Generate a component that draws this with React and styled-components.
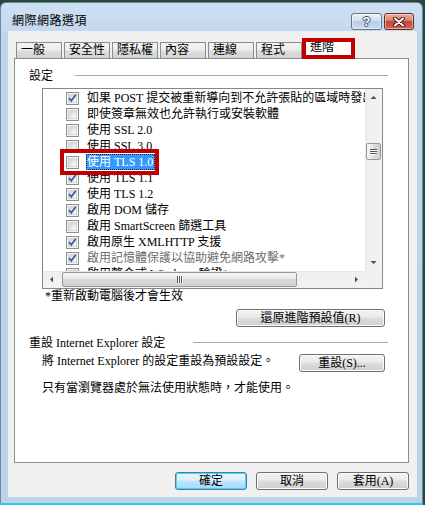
import React from "react";
import styled, { createGlobalStyle } from "styled-components";

const GlobalStyle = createGlobalStyle`
  html, body { margin: 0; padding: 0; }
  body {
    background: #27483b;
    font-family: "Liberation Serif", "Noto Sans CJK TC", serif;
    font-size: 12px;
    color: #000;
  }
`;

const Screen = styled.div`
  width: 425px;
  height: 505px;
  box-sizing: border-box;
  padding-top: 2px;
  background: #27483b;
  overflow: hidden;
`;

const Window = styled.div`
  width: 423px;
  height: 501px;
  box-sizing: border-box;
  display: flex;
  flex-direction: column;
  background: linear-gradient(#cfe0f3, #bed4ec 40px, #bcd3eb);
  border: 1px solid #6b88a8;
  border-bottom: none;
  border-radius: 6px 6px 0 0;
  padding: 0 5px 6px 7px;
`;

const TitleBar = styled.div`
  height: 28px;
  display: flex;
  align-items: flex-start;
`;

const Title = styled.div`
  flex: 1;
  margin: 11px 0 0 4px;
  line-height: 14px;
  letter-spacing: 0.5px;
`;

const CaptionButton = styled.div`
  width: ${p => (p.$close ? 30 : 31)}px;
  height: 17px;
  margin-top: 10px;
  margin-left: ${p => (p.$close ? 2 : 0)}px;
  margin-right: ${p => (p.$close ? 3 : 0)}px;
  box-sizing: border-box;
  border: 1px solid ${p => (p.$close ? "#6a2a24" : "#5f7591")};
  border-radius: 3px;
  display: flex;
  align-items: center;
  justify-content: center;
  box-shadow: inset 0 0 0 1px rgba(255, 255, 255, 0.45);
  background: ${p =>
    p.$close
      ? "linear-gradient(#e9ae9f, #d9806f 45%, #c4463a 50%, #cf6450)"
      : "linear-gradient(#e8eff8, #d3e1f1 45%, #b9cee8 50%, #c8dbef)"};
`;

const HelpGlyph = styled.span`
  font-family: "Liberation Sans", sans-serif;
  font-weight: bold;
  font-size: 13px;
  line-height: 13px;
  color: #fff;
  text-shadow: 1px 0 #3e4f66, -1px 0 #3e4f66, 0 1px #3e4f66, 0 -1px #3e4f66;
`;

const Content = styled.div`
  flex: 1;
  display: flex;
  flex-direction: column;
  background: #f0f0f0;
  padding: 8px 8px 7px 6px;
`;

const TabStrip = styled.div`
  height: 19px;
  display: flex;
  align-items: flex-end;
  padding-left: 2px;
  position: relative;
  z-index: 2;
`;

const Tab = styled.div`
  width: 46px;
  height: 16px;
  margin-right: 2px;
  box-sizing: border-box;
  border: 1px solid #898c95;
  border-bottom: none;
  padding-left: 4px;
  line-height: 15px;
  background: linear-gradient(#f4f4f4, #ececec 45%, #dedede 55%, #d2d2d2);
`;

const ActiveTab = styled.div`
  width: 50px;
  height: 20px;
  margin-left: -2px;
  margin-bottom: -1px;
  box-sizing: border-box;
  border: 1px solid #898c95;
  border-bottom: none;
  padding-left: 7px;
  line-height: 15px;
  background: #fff;
  position: relative;
`;

const Mark = styled.div`
  position: absolute;
  left: ${p => p.$left}px;
  top: ${p => p.$top}px;
  width: ${p => p.$w}px;
  height: ${p => p.$h}px;
  box-sizing: border-box;
  border: 4px solid #c00000;
  pointer-events: none;
  z-index: 3;
`;

const Panel = styled.div`
  flex: 1;
  display: flex;
  flex-direction: column;
  background: #fff;
  border: 1px solid #898c95;
  padding: 8px 20px 0 14px;
`;

const GroupHeader = styled.div`
  height: 16px;
  display: flex;
  align-items: center;
  margin-top: ${p => p.$top || 0}px;
  white-space: nowrap;
`;

const Rule = styled.div`
  flex: 1;
  height: 1px;
  margin-left: ${p => p.$gap}px;
  background: #a8a8a8;
`;

const ListBox = styled.div`
  height: 201px;
  margin: 5px 5px 0 13px;
  box-sizing: border-box;
  border: 1px solid #828790;
  display: grid;
  grid-template-columns: 1fr 17px;
  grid-template-rows: 1fr 17px;
  overflow: hidden;
`;

const Items = styled.div`
  overflow: hidden;
  padding-top: 1px;
  display: flex;
  flex-direction: column;
  min-width: 0;
`;

const Row = styled.div`
  height: 16px;
  flex: none;
  display: flex;
  align-items: center;
  padding-left: 23px;
  white-space: nowrap;
  position: relative;
  color: ${p => (p.$dim ? "#6d6d6d" : "#000")};
`;

const Box = styled.div`
  width: 13px;
  height: 13px;
  flex: none;
  box-sizing: border-box;
  border: 1px solid #8e8f8f;
  background: #f4f4f4;
  padding: 1px;
  position: relative;
`;

const BoxInner = styled.div`
  width: 9px;
  height: 9px;
  background: linear-gradient(135deg, #cdd0d4, #eef0f2 70%, #f8f8f8);
  border: 1px solid #d2d4d6;
  box-sizing: border-box;
`;

const Check = styled.svg`
  position: absolute;
  left: 0;
  top: 0;
`;

const Label = styled.span`
  margin-left: 7px;
  padding: 0 2px 0 1px;
  height: 16px;
  line-height: 16px;
  box-sizing: border-box;
  background: ${p => (p.$selected ? "#3399ff" : "transparent")};
  color: ${p => (p.$selected ? "#fff" : "inherit")};
  outline: ${p => (p.$selected ? "1px dotted #222" : "none")};
  outline-offset: -1px;
`;

const VScroll = styled.div`
  display: flex;
  flex-direction: column;
  background: linear-gradient(90deg, #e2e2e2, #eeeeee 1px, #f3f3f3);
`;

const HScroll = styled.div`
  display: flex;
  background: linear-gradient(#e2e2e2, #eeeeee 1px, #f3f3f3);
`;

const Corner = styled.div`
  background: #f0f0f0;
`;

const Arrow = styled.div`
  width: 17px;
  height: 17px;
  flex: none;
  display: flex;
  align-items: center;
  justify-content: center;
`;

const Spacer = styled.div`
  flex: 1;
`;

const VThumb = styled.div`
  width: 15px;
  height: 17px;
  margin: 37px 0 0 1px;
  box-sizing: border-box;
  border: 1px solid #979797;
  border-radius: 2px;
  background: linear-gradient(90deg, #f5f5f5, #e8e8e8 50%, #d9d9d9 50%, #d0d0d0);
  display: flex;
  flex-direction: column;
  align-items: center;
  justify-content: center;
  gap: 1px;
`;

const HThumb = styled.div`
  width: 235px;
  height: 15px;
  margin: 1px 0 0 2px;
  box-sizing: border-box;
  border: 1px solid #979797;
  border-radius: 2px;
  background: linear-gradient(#f5f5f5, #e8e8e8 50%, #d9d9d9 50%, #d0d0d0);
  display: flex;
  align-items: center;
  justify-content: center;
  gap: 1px;
`;

const GripLine = styled.div`
  width: ${p => (p.$vertical ? 1 : 7)}px;
  height: ${p => (p.$vertical ? 7 : 1)}px;
  background: #555;
  box-shadow: ${p => (p.$vertical ? "1px 0 #fff" : "0 1px #fff")};
`;

const Note = styled.div`
  margin-left: 16px;
  line-height: 14px;
`;

const Button = styled.div`
  width: ${p => p.$w}px;
  height: 18px;
  flex: none;
  box-sizing: border-box;
  border: 1px solid ${p => (p.$default ? "#3c7fb1" : "#707070")};
  border-radius: 3px;
  text-align: center;
  line-height: 16px;
  box-shadow: inset 0 0 0 1px ${p => (p.$default ? "#56d0f5" : "#fbfbfb")};
  background: ${p =>
    p.$default
      ? "linear-gradient(#eaf6fd, #d9f0fc 45%, #bee6fd 50%, #a7d9f5)"
      : "linear-gradient(#f2f2f2, #ebebeb 45%, #dddddd 50%, #cfcfcf)"};
`;

const RestoreButton = styled(Button)`
  align-self: flex-end;
  margin: 6px 3px 0 0;
`;

const DescRow = styled.div`
  display: flex;
  justify-content: space-between;
  align-items: flex-start;
  margin-top: 4px;
  padding: 0 3px 0 13px;
  line-height: 14px;
`;

const Footer = styled.div`
  margin-top: 9px;
  padding-left: 13px;
  line-height: 14px;
`;

const ButtonRow = styled.div`
  display: flex;
  justify-content: flex-end;
  gap: 9px;
  margin-top: 9px;
`;

const Glow = styled.div`
  width: 423px;
  height: 2px;
  background: #2fcbe6;
`;

const items = [
  { text: "如果 POST 提交被重新導向到不允許張貼的區域時發出警告", checked: true },
  { text: "即使簽章無效也允許執行或安裝軟體", checked: false },
  { text: "使用 SSL 2.0", checked: false },
  { text: "使用 SSL 3.0", checked: false },
  { text: "使用 TLS 1.0", checked: false, selected: true },
  { text: "使用 TLS 1.1", checked: true },
  { text: "使用 TLS 1.2", checked: true },
  { text: "啟用 DOM 儲存", checked: true },
  { text: "啟用 SmartScreen 篩選工具", checked: false },
  { text: "啟用原生 XMLHTTP 支援", checked: true },
  { text: "啟用記憶體保護以協助避免網路攻擊*", checked: true, dim: true },
  { text: "啟用整合式 Windows 驗證*", checked: true },
];

const tabs = ["一般", "安全性", "隱私權", "內容", "連線", "程式"];

function Tri({ dir }) {
  const pts = {
    up: "0.5,4 3.5,1 6.5,4",
    down: "0.5,1 3.5,4 6.5,1",
    left: "4,0.5 1,3.5 4,6.5",
    right: "1,0.5 4,3.5 1,6.5",
  }[dir];
  const w = dir === "up" || dir === "down" ? 7 : 5;
  const h = dir === "up" || dir === "down" ? 5 : 7;
  return (
    <svg width={w} height={h} viewBox={`0 0 ${w} ${h}`}>
      <polygon points={pts} fill="#505050" />
    </svg>
  );
}

function CheckBox({ checked }) {
  return (
    <Box>
      <BoxInner />
      {checked && (
        <Check width="11" height="11" viewBox="0 0 11 11">
          <path d="M2 5.2 L4.3 7.8 L8.8 1.8" fill="none" stroke="#3d5a9c" strokeWidth="1.8" />
        </Check>
      )}
    </Box>
  );
}

export default function App() {
  return (
    <Screen>
      <GlobalStyle />
      <Window>
        <TitleBar>
          <Title>網際網路選項</Title>
          <CaptionButton>
            <HelpGlyph>?</HelpGlyph>
          </CaptionButton>
          <CaptionButton $close>
            <svg width="14" height="10" viewBox="0 0 14 10">
              <path d="M3 1.5 L11 8.5 M11 1.5 L3 8.5" stroke="#4a1a16" strokeWidth="4" strokeLinecap="round" />
              <path d="M3 1.5 L11 8.5 M11 1.5 L3 8.5" stroke="#fff" strokeWidth="2" strokeLinecap="round" />
            </svg>
          </CaptionButton>
        </TitleBar>

        <Content>
          <TabStrip>
            {tabs.map(t => (
              <Tab key={t}>{t}</Tab>
            ))}
            <ActiveTab>
              進階
              <Mark $left={-1} $top={-2} $w={53} $h={21} />
            </ActiveTab>
          </TabStrip>

          <Panel>
            <GroupHeader>
              設定
              <Rule $gap={22} />
            </GroupHeader>

            <ListBox>
              <Items>
                {items.map(it => (
                  <Row key={it.text} $dim={it.dim}>
                    <CheckBox checked={it.checked} />
                    <Label $selected={it.selected}>{it.text}</Label>
                    {it.selected && <Mark $left={17} $top={-5} $w={99} $h={26} />}
                  </Row>
                ))}
              </Items>
              <VScroll>
                <Arrow><Tri dir="up" /></Arrow>
                <VThumb>
                  <GripLine />
                  <GripLine />
                  <GripLine />
                </VThumb>
                <Spacer />
                <Arrow><Tri dir="down" /></Arrow>
              </VScroll>
              <HScroll>
                <Arrow><Tri dir="left" /></Arrow>
                <HThumb>
                  <GripLine $vertical />
                  <GripLine $vertical />
                  <GripLine $vertical />
                </HThumb>
                <Spacer />
                <Arrow><Tri dir="right" /></Arrow>
              </HScroll>
              <Corner />
            </ListBox>

            <Note>*重新啟動電腦後才會生效</Note>
            <RestoreButton $w={149}>還原進階預設值(R)</RestoreButton>

            <GroupHeader $top={7}>
              重設 Internet Explorer 設定
              <Rule $gap={28} />
            </GroupHeader>
            <DescRow>
              <span>將 Internet Explorer 的設定重設為預設設定。</span>
              <Button $w={86}>重設(S)...</Button>
            </DescRow>
            <Footer>只有當瀏覽器處於無法使用狀態時，才能使用。</Footer>
          </Panel>

          <ButtonRow>
            <Button $w={72} $default>確定</Button>
            <Button $w={72}>取消</Button>
            <Button $w={72}>套用(A)</Button>
          </ButtonRow>
        </Content>
      </Window>
      <Glow />
    </Screen>
  );
}
